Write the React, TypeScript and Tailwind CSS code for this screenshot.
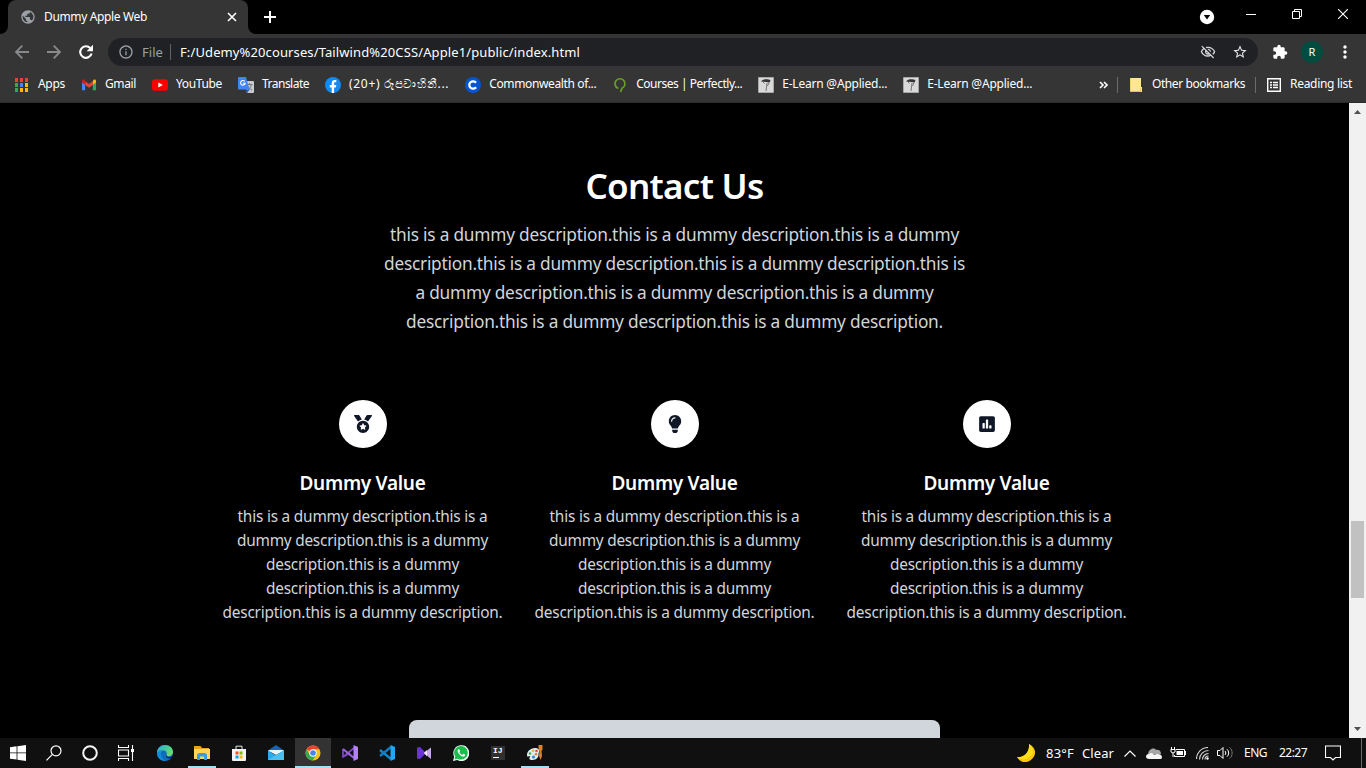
import { useLayoutEffect, useRef, useState } from "react";
import type { ReactNode } from "react";
import { FaLightbulb, FaMedal, FaPoll } from "react-icons/fa";
import {
  MdExtension,
  MdInfoOutline,
  MdMoreVert,
  MdOutlineVisibilityOff,
  MdPublic,
  MdStarBorder,
} from "react-icons/md";

/** One line of text whose tracking is adjusted so that it spans `w` pixels. */
function Line({ w, className = "", children }: { w: number; className?: string; children: string }) {
  const ref = useRef<HTMLSpanElement>(null);
  const [spacing, setSpacing] = useState(0);
  useLayoutEffect(() => {
    if (ref.current) {
      const natural = ref.current.getBoundingClientRect().width;
      setSpacing((w - natural) / children.length);
    }
  }, [w, children]);
  return (
    <span
      ref={ref}
      className={`inline-block shrink-0 whitespace-nowrap ${className}`}
      style={{ letterSpacing: `${spacing}px` }}
    >
      {children}
    </span>
  );
}

function TabStrip() {
  return (
    <div className="flex h-[34px] bg-black">
      <div className="flex w-2 items-end bg-[#353535]">
        <div className="h-full w-2 rounded-br-lg bg-black" />
      </div>
      <div className="bg-black">
        <div className="flex h-[34px] w-[240px] items-center rounded-t-lg bg-[#353535] pr-[10px] pl-3">
          <MdPublic className="size-4 text-[#9aa0a6]" />
          <Line w={103} className="ml-2 text-[12px] text-white">Dummy Apple Web</Line>
          <svg className="ml-auto size-3" viewBox="0 0 12 12" stroke="#fff" strokeWidth="1.6">
            <path d="M2 2l8 8M10 2l-8 8" />
          </svg>
        </div>
      </div>
      <div className="w-2 bg-[#353535]">
        <div className="h-full w-2 rounded-bl-lg bg-black" />
      </div>
      <svg className="mt-[11px] ml-2 size-3" viewBox="0 0 12 12" stroke="#fff" strokeWidth="2">
        <path d="M6 0v12M0 6h12" />
      </svg>
      <div className="ml-auto flex">
        <svg className="mt-[9px] mr-[31px] size-4" viewBox="0 0 16 16">
          <circle cx="8" cy="8" r="7.2" fill="#fff" />
          <path d="M4.8 6h6.4L8 10.6z" fill="#000" />
        </svg>
        <svg className="mt-[9px] h-[11px] w-[10px]" viewBox="0 0 10 11">
          <path d="M0 5.5h10" stroke="#fff" />
        </svg>
        <svg className="mt-[9px] ml-[36px] size-[10px]" viewBox="0 0 10 10" fill="none" stroke="#fff">
          <path d="M.5 2.5h7v7h-7zM2.5 2.5v-2h7v7h-2" />
        </svg>
        <svg className="mt-[9px] mr-[18px] ml-[36px] size-[10px]" viewBox="0 0 10 10" stroke="#fff" strokeWidth="1.1">
          <path d="M0 0l10 10M10 0L0 10" />
        </svg>
      </div>
    </div>
  );
}

function Toolbar() {
  return (
    <div className="flex h-[36px] items-center bg-[#353535] pl-[14px]">
      <svg className="size-4" viewBox="0 0 16 16" fill="none" stroke="#88898b" strokeWidth="1.8">
        <path d="M15 8H2M8.3 1.7L2 8l6.3 6.3" />
      </svg>
      <svg className="ml-4 size-4" viewBox="0 0 16 16" fill="none" stroke="#88898b" strokeWidth="1.8">
        <path d="M1 8h13M7.7 1.7L14 8l-6.3 6.3" />
      </svg>
      <svg className="ml-4 size-4" viewBox="0 0 16 16">
        <path d="M13.600 9.500A5.800 5.800 0 1 1 12.300 4.100" fill="none" stroke="#fff" strokeWidth="2.100" />
        <path d="M15 .8v6.400H8.600z" fill="#fff" />
      </svg>
      <div className="ml-[14px] flex h-7 w-[1150px] items-center rounded-full bg-[#202124] pl-[10px]">
        <MdInfoOutline className="size-4 text-[#9aa0a6]" />
        <Line w={21} className="ml-2 pt-px text-[13px] text-[#9aa0a6]">File</Line>
        <div className="ml-[7px] h-4 w-px bg-[#5f6368]" />
        <Line w={400} className="ml-[9px] pt-px text-[13px] text-white">
          F:/Udemy%20courses/Tailwind%20CSS/Apple1/public/index.html
        </Line>
        <MdOutlineVisibilityOff className="mr-4 ml-auto size-4 text-[#d5d7d9]" />
        <MdStarBorder className="mr-[10px] size-4 text-[#e5e7e9]" />
      </div>
      <MdExtension className="ml-[14px] size-4 text-white" />
      <div className="ml-[13px] flex size-[22px] items-center justify-center rounded-full bg-[#004d40] text-[11px] text-white">
        R
      </div>
      <MdMoreVert className="ml-[12px] size-5 text-white" />
    </div>
  );
}

function Bookmark({ icon, w, children }: { icon: ReactNode; w: number; children: string }) {
  return (
    <div className="flex items-center gap-2">
      {icon}
      <Line w={w} className="-mt-px text-[12px] leading-[18px] text-white">{children}</Line>
    </div>
  );
}

function AppsIcon() {
  const colors = ["#ea4335", "#ea4335", "#ea4335", "#34a853", "#4285f4", "#fbbc05", "#34a853", "#fbbc05", "#fbbc05"];
  return (
    <svg className="mr-px size-4" viewBox="0 0 16 16">
      {colors.map((c, i) => (
        <rect key={i} x={2 + (i % 3) * 5} y={1 + Math.floor(i / 3) * 5} width="3" height="4" fill={c} />
      ))}
    </svg>
  );
}

function GmailIcon() {
  return (
    <svg className="size-4" viewBox="0 0 16 16">
      <path d="M1 4v9.2h3.2V6.5z" fill="#4285f4" />
      <path d="M15 4v9.2h-3.2V6.5z" fill="#34a853" />
      <path d="M11.8 4.2V8L15 5.5V4c0-1.5-1.5-1.9-2.4-1.2z" fill="#fbbc04" />
      <path d="M4.2 4.2V8L8 10.8 11.8 8V4.2L8 7z" fill="#ea4335" />
      <path d="M1 4v1.5L4.2 8V4.2L3.4 2.8C2.5 2.100 1 2.500 1 4z" fill="#c5221f" />
    </svg>
  );
}

function YouTubeIcon() {
  return (
    <svg className="size-4" viewBox="0 0 16 16">
      <rect y="2.3" width="16" height="11.4" rx="3" fill="#f00" />
      <path d="M6.3 5.500v5L10.800 8z" fill="#fff" />
    </svg>
  );
}

function TranslateIcon() {
  return (
    <svg className="size-4" viewBox="0 0 16 16">
      <path d="M6 4h9a1 1 0 0 1 1 1v10a1 1 0 0 1-1 1H9z" fill="#c9cbce" />
      <path d="M8.500 7.500h6M11.500 6v1.500M10 13c2-1.500 3-3 3.200-5.500M10 9c.6 1.800 2 3 4 4" stroke="#6b7075" strokeWidth=".9" fill="none" />
      <path d="M1 0h7l3.500 12.500H1a1 1 0 0 1-1-1V1a1 1 0 0 1 1-1z" fill="#4285f4" />
      <path d="M7.500 12.500h4L9.300 16z" fill="#2a56c6" />
      <path d="M6.700 4.300A2.300 2.300 0 1 0 7.200 6.300H5" stroke="#fff" strokeWidth="1.1" fill="none" />
    </svg>
  );
}

function FacebookIcon() {
  return (
    <svg className="size-4" viewBox="0 0 16 16">
      <circle cx="8" cy="8" r="8" fill="#1489f0" />
      <path d="M6.700 16v-5.600h-2V8h2V6.300c0-2.100 1.200-3.200 3-3.200.9 0 1.600.1 1.600.1v2h-1c-1 0-1.200.6-1.200 1.200V8h2.200l-.4 2.400H9.100V16z" fill="#fff" />
    </svg>
  );
}

function CommonwealthIcon() {
  return (
    <svg className="size-4" viewBox="0 0 16 16">
      <circle cx="8" cy="8" r="8" fill="#0056d2" />
      <path d="M11 5.800A3.700 3.700 0 1 0 11 10.200" stroke="#fff" strokeWidth="2.3" fill="none" />
    </svg>
  );
}

function CoursesIcon() {
  return (
    <svg className="size-4" viewBox="0 0 16 16" fill="none" stroke="#67a024" strokeWidth="1.7">
      <path d="M6.400 11.500A5 5 0 1 1 10 11.300l-1.500 3.500" />
    </svg>
  );
}

function ElearnIcon() {
  return (
    <svg className="size-4" viewBox="0 0 16 16">
      <rect width="16" height="16" rx="1" fill="#a8a8a8" />
      <rect x="1" y="1" width="14" height="14" fill="#d9d9d9" />
      <path d="M3 4.500c2-3 7-2.500 9.500-1.500l-.8 2.500-4-.6z" fill="#353535" />
      <path d="M9 6l-1 8M11 5.500L9.500 9M5 5l1.500 1.500" stroke="#777" fill="none" />
    </svg>
  );
}

function BookmarksBar() {
  return (
    <div className="flex h-[33px] items-center gap-4 border-b border-[#2a2b2c] bg-[#353535] pb-[3px] pl-[13px]">
      <Bookmark icon={<AppsIcon />} w={27}>Apps</Bookmark>
      <Bookmark icon={<GmailIcon />} w={31}>Gmail</Bookmark>
      <Bookmark icon={<YouTubeIcon />} w={46}>YouTube</Bookmark>
      <Bookmark icon={<TranslateIcon />} w={47}>Translate</Bookmark>
      <Bookmark icon={<FacebookIcon />} w={103}>(20+) රූපවාහිනී...</Bookmark>
      <Bookmark icon={<CommonwealthIcon />} w={107}>Commonwealth of...</Bookmark>
      <Bookmark icon={<CoursesIcon />} w={106}>Courses | Perfectly...</Bookmark>
      <Bookmark icon={<ElearnIcon />} w={105}>E-Learn @Applied...</Bookmark>
      <Bookmark icon={<ElearnIcon />} w={105}>E-Learn @Applied...</Bookmark>
      <div className="mr-[14px] ml-auto flex items-center">
        <svg className="h-[8px] w-[9px]" viewBox="0 0 9 8" fill="none" stroke="#fff" strokeWidth="1.6">
          <path d="M1 1l3 3-3 3M5 1l3 3-3 3" />
        </svg>
        <div className="ml-[9px] h-4 w-px bg-[#6a6b6d]" />
        <svg className="ml-3 h-[14px] w-3" viewBox="0 0 12 14">
          <path d="M0 0h11v9h1v5H0z" fill="#ffe596" />
          <path d="M0 0v13.500h10.500v-3" fill="none" stroke="#e8c04c" />
        </svg>
        <Line w={93} className="-mt-px ml-[10px] text-[12px] leading-[18px] text-white">Other bookmarks</Line>
        <div className="ml-[10px] h-4 w-px bg-[#6a6b6d]" />
        <svg className="ml-[11px] size-[14px]" viewBox="0 0 14 14" fill="none" stroke="#fff">
          <path d="M.7.7h12.600v12.600H.7z" strokeWidth="1.4" />
          <path d="M3 4.500h2M6 4.500h5M3 7h2M6 7h5M3 9.500h2M6 9.500h5" strokeWidth="1.3" />
        </svg>
        <Line w={62} className="-mt-px ml-[9px] text-[12px] leading-[18px] text-white">Reading list</Line>
      </div>
    </div>
  );
}

function ValueCard({ icon }: { icon: ReactNode }) {
  return (
    <div className="flex w-[280px] flex-col items-center">
      <div className="flex size-12 items-center justify-center rounded-full bg-white text-lg text-gray-900">{icon}</div>
      <Line w={126} className="mt-[21px] text-[19px] leading-7 font-semibold text-white">Dummy Value</Line>
      <div className="mt-2 flex flex-col items-center text-[15.4px] leading-6 text-gray-300">
        <Line w={250}>this is a dummy description.this is a</Line>
        <Line w={251}>dummy description.this is a dummy</Line>
        <Line w={193}>description.this is a dummy</Line>
        <Line w={193}>description.this is a dummy</Line>
        <Line w={280}>description.this is a dummy description.</Line>
      </div>
    </div>
  );
}

function ContactPage() {
  return (
    <main className="flex flex-1 flex-col items-center overflow-hidden bg-black">
      <Line w={178} className="mt-[63px] text-[35px] leading-[40px] font-semibold text-white">Contact Us</Line>
      <div className="mt-[14px] flex flex-col items-center text-[17.3px] leading-[29px] text-gray-300">
        <Line w={569}>this is a dummy description.this is a dummy description.this is a dummy</Line>
        <Line w={581}>description.this is a dummy description.this is a dummy description.this is</Line>
        <Line w={518}>a dummy description.this is a dummy description.this is a dummy</Line>
        <Line w={537}>description.this is a dummy description.this is a dummy description.</Line>
      </div>
      <div className="mt-16 flex gap-8">
        <ValueCard icon={<FaMedal />} />
        <ValueCard icon={<FaLightbulb />} />
        <ValueCard icon={<FaPoll />} />
      </div>
      <div className="mt-[95px] h-20 w-[531px] shrink-0 rounded-lg bg-gray-300" />
    </main>
  );
}

function Scrollbar() {
  return (
    <div className="flex w-[17px] flex-col items-center bg-[#f1f1f1]">
      <svg className="mt-[7px] h-[4px] w-[7px]" viewBox="0 0 7 4">
        <path d="M3.500 0L7 4H0z" fill="#505050" />
      </svg>
      <div className="mt-[407px] h-[77px] w-[13px] bg-[#c1c1c1]" />
      <svg className="mt-auto mb-[7px] h-[4px] w-[7px]" viewBox="0 0 7 4">
        <path d="M3.500 4L7 0H0z" fill="#505050" />
      </svg>
    </div>
  );
}

function TaskButton({ children, active, running }: { children: ReactNode; active?: boolean; running?: boolean }) {
  return (
    <div className={`flex h-[30px] w-9 flex-col items-center ${active ? "bg-[#333333]" : ""}`}>
      <div className="flex h-7 items-center justify-center pt-[2px]">{children}</div>
      {active && <div className="h-[2px] w-9 bg-[#a5ddfb]" />}
      {running && <div className="h-[2px] w-7 bg-[#a5ddfb]" />}
    </div>
  );
}

function Taskbar() {
  return (
    <footer className="flex h-[30px] items-center bg-[#101010]">
      <TaskButton>
        <svg className="size-4" viewBox="0 0 16 16" fill="#fff">
          <path d="M0 2.200l6.600-.9v6.200H0zM7.400 1.200L16 0v7.500H7.400zM0 8.300h6.600v6.300L0 13.700zM7.400 8.300H16V16l-8.600-1.200z" />
        </svg>
      </TaskButton>
      <TaskButton>
        <svg className="size-4" viewBox="0 0 16 16" fill="none" stroke="#fff" strokeWidth="1.2">
          <circle cx="10" cy="5.800" r="5" />
          <path d="M6.400 9.400L.5 15.300" />
        </svg>
      </TaskButton>
      <TaskButton>
        <svg className="size-4" viewBox="0 0 16 16" fill="none" stroke="#f4f4f4" strokeWidth="2">
          <circle cx="8" cy="8" r="6.800" />
        </svg>
      </TaskButton>
      <TaskButton>
        <svg className="size-4" viewBox="0 0 16 16" fill="none" stroke="#fff" strokeWidth="1.1">
          <path d="M.5 0v2.500h10V0M.5 16v-2.500h10V16M.5 5h10v6H.5zM14.500 0v16" />
          <path d="M13 4h3v3h-3z" fill="#fff" stroke="none" />
        </svg>
      </TaskButton>
      <div className="ml-[3px] flex gap-px">
        <TaskButton>
          <svg className="size-4" viewBox="0 0 16 16">
            <defs>
              <linearGradient id="edge-top" x1="0" y1="0" x2="1" y2=".5">
                <stop offset="0" stopColor="#2aa7df" />
                <stop offset="1" stopColor="#5fe06a" />
              </linearGradient>
            </defs>
            <circle cx="8" cy="8" r="8" fill="#0f6cbd" />
            <path d="M0 8.500C0 3 3.700 0 8 0c4.700 0 8 3.200 8 7 0 2.700-2 4.200-4.300 4.200-1.500 0-2.500-.7-2.200-1.500.6-1.700.2-4.300-3-4.300C3.500 5.400.7 6.500 0 8.500z" fill="url(#edge-top)" />
            <path d="M0 8.500c.9-2.400 3.200-3.400 5.500-3.100C3.300 6.800 2.800 13 9 15.900 4 16.400 0 13 0 8.500z" fill="#138bd9" />
            <path d="M9.600 9c-1.300 1.400.5 3.500 3 3.300 1.300 0 2.200-.6 2.900-1.200l1 .4-1 1.500c-4.500 1-8-1-5.900-4z" fill="#101010" />
          </svg>
        </TaskButton>
        <TaskButton running>
          <svg className="size-4" viewBox="0 0 16 16">
            <path d="M0 1h6.500l1.500 2h7v4H0z" fill="#e8a317" />
            <path d="M0 4h16v10H0z" fill="#ffd65c" />
            <path d="M3 15V9.500L5 8h6l2 1.500V15h-3v-3.500H6V15z" fill="#3b9bea" />
          </svg>
        </TaskButton>
        <TaskButton>
          <svg className="size-4" viewBox="0 0 16 16">
            <path d="M5 4V1.200h6V4" fill="none" stroke="#e5e5e5" />
            <path d="M1 4h14v11a1 1 0 0 1-1 1H2a1 1 0 0 1-1-1z" fill="#f3f3f3" />
            <path d="M4.500 6.500h3v3h-3z" fill="#f25022" />
            <path d="M8.500 6.500h3v3h-3z" fill="#7fba00" />
            <path d="M4.500 10.500h3v3h-3z" fill="#00a4ef" />
            <path d="M8.500 10.500h3v3h-3z" fill="#ffb900" />
          </svg>
        </TaskButton>
        <TaskButton>
          <svg className="size-4" viewBox="0 0 16 16">
            <path d="M0 5.500L8 0l8 5.500V7H0z" fill="#1267b4" />
            <path d="M0 5.500l8 5L16 5.500V15H0z" fill="#2aa9e8" />
            <path d="M2 5h12l2 .5-8 4.500-8-4.500z" fill="#e9f3fa" />
            <path d="M0 15l8-5 8-4.500V15z" fill="#48c0f2" />
          </svg>
        </TaskButton>
        <TaskButton active>
          <svg className="size-4" viewBox="0 0 16 16">
            <circle cx="8" cy="8" r="7.500" fill="#fbc116" />
            <path d="M8 8L1.500 4.250A7.500 7.500 0 0 1 14.500 4.250H8z" fill="#ea4335" />
            <path d="M1.500 4.250A7.500 7.500 0 0 0 7.500 15.500L11.200 9.900 8 8 4.800 9.900z" fill="#34a853" />
            <circle cx="8" cy="8" r="3.700" fill="#fff" />
            <circle cx="8" cy="8" r="2.800" fill="#4285f4" />
          </svg>
        </TaskButton>
        <TaskButton>
          <svg className="size-4" viewBox="0 0 16 16">
            <path d="M1 4v8l7-4M1 12L12 3" fill="none" stroke="#7b45c4" strokeWidth="1.8" strokeLinejoin="round" />
            <path d="M1 4l11 9" stroke="#9a62de" strokeWidth="2.2" />
            <path d="M11.500 0L16 2v12l-4.500 2z" fill="#b583f0" />
          </svg>
        </TaskButton>
        <TaskButton>
          <svg className="size-4" viewBox="0 0 16 16">
            <path d="M1 5L12 14" stroke="#1487cc" strokeWidth="2.4" />
            <path d="M1 11L12 2" stroke="#0f7bc6" strokeWidth="2.4" />
            <path d="M11.500 0L16 2v12l-4.500 2z" fill="#25a4f0" />
          </svg>
        </TaskButton>
        <TaskButton>
          <svg className="size-4" viewBox="0 0 16 16">
            <path d="M1 2.500v11.300L7.500 8z" fill="#6a35d0" />
            <path d="M1 2.500l3-.500L10 8l-6 6-3-.200L6 8z" fill="#6a35d0" />
            <path d="M15 2.500v11.500L8 8z" fill="#c8a9f0" />
            <path d="M11 5v6.300L8 8z" fill="#f5edff" />
          </svg>
        </TaskButton>
        <TaskButton>
          <svg className="size-4" viewBox="0 0 16 16">
            <path d="M0 16l1.200-4.200A8 8 0 1 1 4.200 15z" fill="#f2fff5" />
            <path d="M1.500 14.500l.8-2.900A6.800 6.800 0 1 1 4.600 13.700z" fill="#19bd4b" />
            <path d="M5.500 4c-1.500 1-1 3 .6 5s4 3.200 5.400 2.300c.8-.6.800-1.500.5-1.700L10.200 8.800 9.300 9.900C8 9.500 6.900 8.300 6.400 7.200L7 6.300 6.300 4.200z" fill="#fff" />
          </svg>
        </TaskButton>
        <TaskButton>
          <div className="flex size-[14px] flex-col bg-[#303030] pt-px pl-[2px] font-['Liberation_Mono',monospace] text-[8px] leading-[8px] font-bold text-white">
            IJ
            <div className="mt-[2px] h-px w-[6px] shrink-0 bg-white" />
          </div>
        </TaskButton>
        <TaskButton running>
          <svg className="size-4" viewBox="0 0 16 16">
            <path d="M0 10c0-4 4-7 8-7 3 0 5 2 4 4s0 3-1 5-4 3.500-7 3c-2-.3-2-2-1-3s-1-1-1.800-.5C.4 12 0 11 0 10z" fill="#e0edf3" />
            <circle cx="3" cy="8.500" r="1.300" fill="#47a845" />
            <circle cx="6" cy="5.700" r="1.300" fill="#efb52c" />
            <circle cx="9.500" cy="6" r="1.300" fill="#e04c3a" />
            <circle cx="9" cy="9.300" r="1.300" fill="#e08030" />
            <circle cx="6.500" cy="12" r="1.500" fill="#2e82d6" />
            <path d="M11.500 0h4v4.500l-1 1.500.5 5-1.500 4-1.500-4 .5-5-1-1.500z" fill="#d9822f" />
          </svg>
        </TaskButton>
      </div>
      <div className="ml-auto flex h-full items-center">
        <svg className="size-[18px]" viewBox="0 0 18 18">
          <path d="M12 0c7 4 8 10 3 15S3 19 0 13c5 1 13-3 12-13z" fill="#ffc40c" />
          <path d="M12 0c5 4 5 9 1.500 12.500S4 16 0 13c5 1 13-3 12-13z" fill="#ffe018" />
        </svg>
        <Line w={28} className="ml-[11px] pt-[2px] text-[13px] text-white">83°F</Line>
        <Line w={32} className="ml-2 pt-[2px] text-[13px] text-white">Clear</Line>
        <svg className="ml-[10px] h-[7px] w-3" viewBox="0 0 12 7" fill="none" stroke="#fff" strokeWidth="1.2">
          <path d="M.5 6.500L6 1l5.500 5.500" />
        </svg>
        <svg className="ml-[10px] h-[11px] w-4" viewBox="0 0 16 11">
          <path d="M2 7C2 1 8-1 10 2c3-.8 5 1 5 4z" fill="#a5a5a5" />
          <path d="M3 11C-1 11-1 6 3 6c2-2 4-1 5 1 3-2 8-1 8 2 0 2-1 2-3 2z" fill="#f5f5f5" />
        </svg>
        <svg className="ml-2 h-3 w-4" viewBox="0 0 16 12" fill="none" stroke="#fff">
          <path d="M1.500 0v3M4.500 0v3M.5 2.500h5M1 3v2l2 1 2-1V3M3 6v4" />
          <path d="M6 2.500h8.500v7H4.500V8" />
          <path d="M6.500 4h6.500v4H6.500z" fill="#fff" stroke="none" />
          <path d="M15.500 4v4" />
        </svg>
        <svg className="ml-[10px] size-[13px]" viewBox="0 0 13 13" fill="none" stroke="#d8d8d8" strokeWidth="1.1">
          <path d="M.5 12A11.500 11.500 0 0 1 12 .5M3.500 12.500A9 9 0 0 1 12.500 3.500M6.500 12.500a6 6 0 0 1 6-6M9 12.500A3.500 3.500 0 0 1 12.500 9" />
          <circle cx="11.500" cy="11.500" r="1.200" fill="#fff" stroke="none" />
        </svg>
        <svg className="ml-2 h-[14px] w-4" viewBox="0 0 16 14" fill="none" stroke="#fff">
          <path d="M.5 4.500h2.500l3-3v11l-3-3H.5z" />
          <path d="M8 5c1 1 1 3 0 4M10 3.300c2.200 2 2.200 5.400 0 7.400" />
          <path d="M12.500 1.300c3.500 3.200 3.500 8.200 0 11.400" stroke="#777" />
        </svg>
        <Line w={23} className="ml-[11px] text-[12px] text-white">ENG</Line>
        <Line w={28} className="ml-[12px] text-[12px] text-white">22:27</Line>
        <svg className="ml-[18px] size-4" viewBox="0 0 16 16" fill="none" stroke="#fff" strokeWidth="1.1">
          <path d="M.5 1h15v11.500h-5L8 15l-2.500-2.500h-5z" />
        </svg>
        <div className="mr-1 ml-5 h-[30px] w-px bg-[#6a6a6a]" />
      </div>
    </footer>
  );
}

export default function App() {
  return (
    <div className="flex h-[768px] w-[1366px] flex-col overflow-hidden bg-black font-['Noto_Sans',sans-serif]">
      <TabStrip />
      <Toolbar />
      <BookmarksBar />
      <div className="flex h-[635px]">
        <ContactPage />
        <Scrollbar />
      </div>
      <Taskbar />
    </div>
  );
}
